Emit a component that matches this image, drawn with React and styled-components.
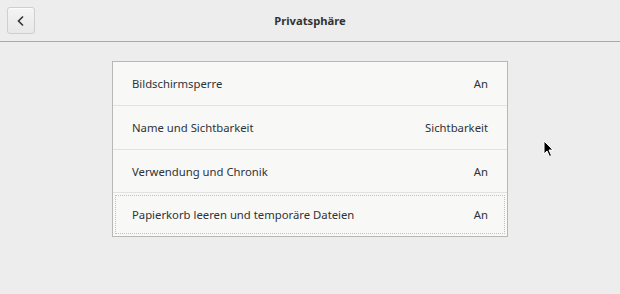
import React from "react";
import styled, { createGlobalStyle } from "styled-components";

const Global = createGlobalStyle`
  html, body { margin: 0; padding: 0; }
  body {
    width: 620px; height: 294px; overflow: hidden;
    background: #ededed;
    font-family: "Noto Sans", "DejaVu Sans", sans-serif;
    color: #2e3436;
  }
`;

const Window = styled.div`
  position: relative;
  width: 620px;
  height: 294px;
  background: #ededed;
`;

const HeaderBar = styled.header`
  height: 42px;
  box-sizing: border-box;
  border-bottom: 1px solid #a9a9a9;
  display: grid;
  grid-template-columns: 1fr auto 1fr;
  align-items: center;
  padding: 0 7px;
  background: #ededed;
`;

const BackButton = styled.button`
  justify-self: start;
  width: 28px;
  height: 27px;
  border: 1px solid #cfcfcf;
  border-radius: 3px;
  background: linear-gradient(#f4f4f4, #e8e8e8);
  display: flex;
  align-items: center;
  justify-content: center;
  padding: 0;
  box-shadow: 0 1px 0 rgba(255,255,255,0.6) inset;
`;

const Title = styled.h1`
  margin: 0;
  font-size: 11.2px;
  font-weight: 700;
  color: #2e3436;
`;

const Content = styled.main`
  display: flex;
  justify-content: center;
  padding-top: 19px;
`;

const Card = styled.div`
  width: 396px;
  box-sizing: border-box;
  border: 1px solid #b8b8b8;
  background: #f8f8f7;
  display: flex;
  flex-direction: column;
`;

const Row = styled.div`
  height: ${(p) => (p.$first ? "43px" : "43.7px")};
  box-sizing: border-box;
  display: flex;
  align-items: center;
  justify-content: space-between;
  padding: 0 19px;
  font-size: 11.3px;
  color: #2e3436;
  border-top: ${(p) => (p.$first ? "none" : "1px solid #e2e2e1")};
  position: relative;
  ${(p) =>
    p.$focused &&
    `
    &::after {
      content: "";
      position: absolute;
      left: 2px; right: 2px; top: 2px; bottom: 2px;
      border: 1px dotted #c0c0c0;
      pointer-events: none;
    }
  `}
`;

const Value = styled.span`
  color: #2e3436;
`;

const Cursor = styled.svg`
  position: absolute;
  left: 543px;
  top: 140px;
`;

const rows = [
  ["Bildschirmsperre", "An"],
  ["Name und Sichtbarkeit", "Sichtbarkeit"],
  ["Verwendung und Chronik", "An"],
  ["Papierkorb leeren und temporäre Dateien", "An"],
];

export default function App() {
  return (
    <Window>
      <Global />
      <HeaderBar>
        <BackButton aria-label="Zurück">
          <svg width="10" height="12" viewBox="0 0 10 12">
            <path d="M7 1.5 L2.5 6 L7 10.5" fill="none" stroke="#2e3436" strokeWidth="1.6" />
          </svg>
        </BackButton>
        <Title>Privatsphäre</Title>
        <span />
      </HeaderBar>
      <Content>
        <Card>
          {rows.map(([label, value], i) => (
            <Row key={label} $first={i === 0} $focused={i === rows.length - 1}>
              <span>{label}</span>
              <Value>{value}</Value>
            </Row>
          ))}
        </Card>
      </Content>
      <Cursor width="12" height="18" viewBox="0 0 12 18">
        <path d="M1 1 L1 14 L4 11 L6.5 16.5 L8.5 15.5 L6 10 L10 10 Z" fill="#000" stroke="#fff" strokeWidth="1" />
      </Cursor>
    </Window>
  );
}
